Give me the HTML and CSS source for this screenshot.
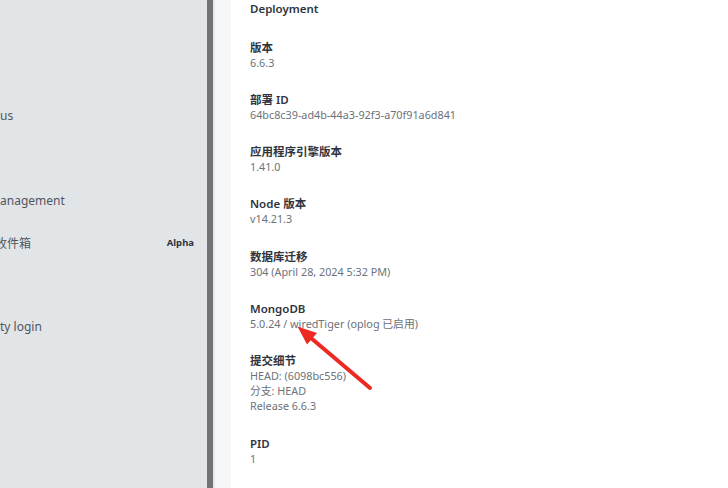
FILE: index.html
```html
<!DOCTYPE html>
<html lang="zh">
<head>
<meta charset="utf-8">
<link rel="stylesheet" href="styles.css">
</head>
<body>
<div class="page">
  <nav class="sidebar">
    <ul class="nav">
      <li class="nav-item"><span class="label"></span></li>
      <li class="nav-item"><span class="label"></span></li>
      <li class="nav-item"><span class="label">us</span></li>
      <li class="nav-item"><span class="label"></span></li>
      <li class="nav-item"><span class="label">anagement</span></li>
      <li class="nav-item"><span class="label label-cut">收件箱</span><span class="badge">Alpha</span></li>
      <li class="nav-item"><span class="label"></span></li>
      <li class="nav-item"><span class="label">ty login</span></li>
      <li class="nav-item"><span class="label"></span></li>
      <li class="nav-item"><span class="label"></span></li>
    </ul>
  </nav>
  <div class="divider"></div>
  <div class="gutter"></div>
  <main class="content">
    <h3 class="heading">Deployment</h3>
    <div class="field"><div class="field-label">版本</div><div class="field-value">6.6.3</div></div>
    <div class="field"><div class="field-label">部署 ID</div><div class="field-value">64bc8c39-ad4b-44a3-92f3-a70f91a6d841</div></div>
    <div class="field"><div class="field-label">应用程序引擎版本</div><div class="field-value">1.41.0</div></div>
    <div class="field"><div class="field-label">Node 版本</div><div class="field-value">v14.21.3</div></div>
    <div class="field"><div class="field-label">数据库迁移</div><div class="field-value">304 (April 28, 2024 5:32 PM)</div></div>
    <div class="field"><div class="field-label">MongoDB</div><div class="field-value">5.0.24 / wiredTiger (oplog 已启用)</div></div>
    <div class="field"><div class="field-label">提交细节</div><div class="field-value">HEAD: (6098bc556)</div><div class="field-value">分支: HEAD</div><div class="field-value">Release 6.6.3</div></div>
    <div class="field"><div class="field-label">PID</div><div class="field-value">1</div></div>
  </main>
</div>
<svg class="annotation" width="728" height="488" viewBox="0 0 728 488">
  <line x1="370" y1="388" x2="311" y2="338" stroke="#ec2a22" stroke-width="4" stroke-linecap="round"/>
  <polygon points="297.5,326.5 317,333 307,344.5" fill="#ec2a22"/>
</svg>
</body>
</html>
```
FILE: styles.css
```css
html, body {
  margin: 0;
  padding: 0;
  width: 728px;
  height: 488px;
  overflow: hidden;
  background: #ffffff;
  font-family: "Noto Sans", "Noto Sans CJK SC", sans-serif;
}

.page {
  display: flex;
  height: 488px;
}

.sidebar {
  width: 207px;
  flex: none;
  background: #e2e5e8;
  overflow: hidden;
}

.nav {
  list-style: none;
  margin: 0;
  padding: 10.5px 0 0 0;
}

.nav-item {
  height: 42.2px;
  display: flex;
  align-items: center;
  justify-content: space-between;
  padding-right: 13px;
}

.label {
  font-size: 12px;
  color: #50565d;
  white-space: nowrap;
}

.label-cut {
  margin-left: -5px;
}

.badge {
  font-size: 9.5px;
  font-weight: 700;
  color: #2f343d;
}

.divider {
  width: 6px;
  flex: none;
  background: #737373;
}

.gutter {
  width: 18px;
  flex: none;
  background: #f5f7f9;
  border-left: 2px solid #e4e8ec;
  box-sizing: border-box;
}

.content {
  flex: 1;
  padding: 1px 19px 0 19px;
  background: #ffffff;
}

.heading {
  margin: 0;
  font-size: 11.5px;
  line-height: 15px;
  font-weight: 600;
  color: #2f343d;
}

.field {
  margin-top: 22.33px;
}

.heading + .field {
  margin-top: 23.5px;
}

.field-label {
  font-size: 11.5px;
  line-height: 15px;
  font-weight: 600;
  color: #2f343d;
}

.field-value {
  font-size: 10.8px;
  line-height: 15px;
  color: #6c727a;
}

.annotation {
  position: absolute;
  left: 0;
  top: 0;
  pointer-events: none;
}
```
